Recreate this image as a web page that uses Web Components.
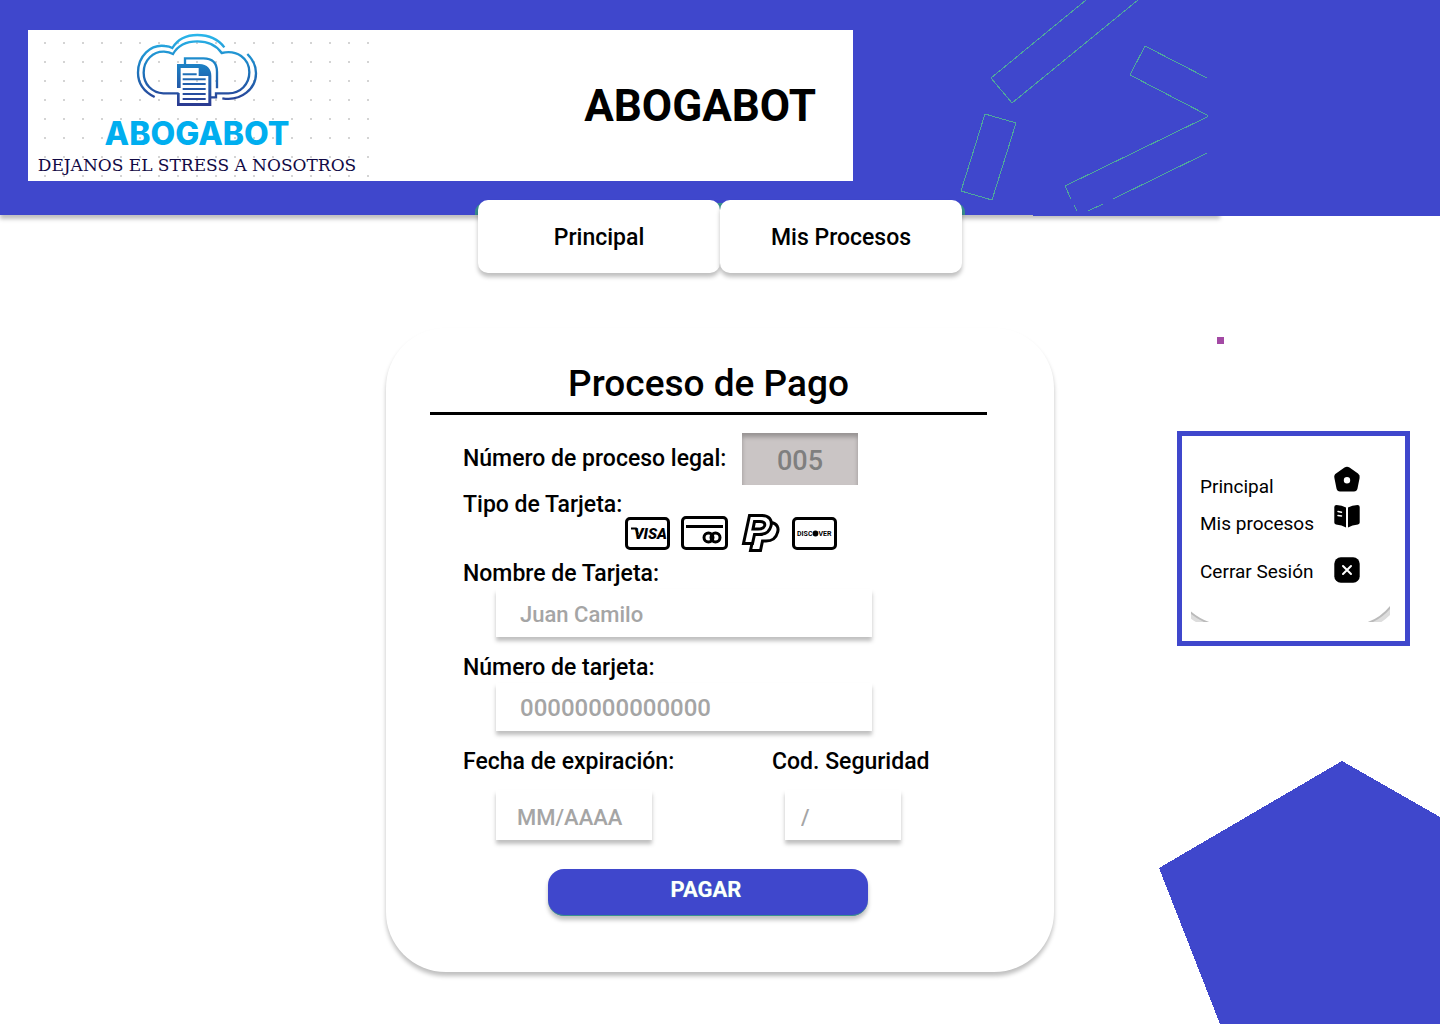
<!DOCTYPE html>
<html lang="es">
<head>
<meta charset="utf-8">
<title>Abogabot - Proceso de Pago</title>
<style>
  :root { --brand: #3f47cc; --teal: #39908f; --drop: 0 4px 4px rgba(0, 0, 0, .25); }
  body { margin: 0; background: #fff; color: #000; font-family: Roboto, "Noto Sans", sans-serif; }
</style>
</head>
<body>
<abogabot-app></abogabot-app>

<script>
const define = (name, html) => customElements.define(name, class extends HTMLElement {
  constructor() {
    super();
    const t = document.createElement('template');
    t.innerHTML = html;
    this.attachShadow({ mode: 'open' }).append(t.content.cloneNode(true));
  }
});

define('brand-logo', `
<style>
  :host { display: flex; flex-direction: column; align-items: center; box-sizing: border-box; width: 342px; padding: 2px 4px 0 0;
    background: radial-gradient(circle at 1px 1px, #d4d4d4 1px, transparent 1px) 16px 12px / 19px 19px; }
  svg { display: block; width: 126px; height: 76px; }
  .name { margin-top: 8px; font: 800 32px/36px Inter, sans-serif; color: #00aeef; }
  .motto { font: 17px/26px "DejaVu Serif", serif; color: #120a45; white-space: nowrap; }
</style>
<svg viewBox="342 36 378 228" fill="none" stroke="url(#g)" stroke-width="7" aria-hidden="true">
  <defs><linearGradient id="g" gradientUnits="userSpaceOnUse" x1="0" y1="44" x2="0" y2="258">
    <stop offset="0" stop-color="#29b6ea"/><stop offset=".45" stop-color="#1c7dc2"/><stop offset="1" stop-color="#2b3990"/></linearGradient></defs>
  <path d="M404 231C372 215 354 190 354 158C354 108 392 72 435 78Q448 79 457 84C474 56 500 45 532 45C566 45 595 58 613 82"/>
  <path d="M476 220H430C395 218 371 192 371 158C371 120 400 94 432 95Q448 96 459 102C473 77 500 64 532 64C565 64 590 77 605 99C650 88 688 115 688 157C688 192 662 220 625 220H588V232H570"/>
  <path d="M682 102C700 120 708 138 708 160C708 205 665 245 607 235"/>
  <path d="M495 132V115H550C580 115 591 130 591 155V205"/>
  <path fill="url(#g)" stroke="none" d="M471 132H538C562 132 574 148 574 168V258H471V219H479V249H565V168H536V144H482V204H471Z"/>
  <path stroke-width="6" d="M488 163H530M488 178H557M488 192H557M488 207H557M488 222H557M488 237H557"/>
</svg>
<span class="name">ABOGABOT</span>
<span class="motto">DEJANOS EL STRESS A NOSOTROS</span>`);

define('header-art', `
<style>
  :host { display: block; position: absolute; top: 0; right: 200px; width: 300px; height: 215px; pointer-events: none; }
  svg { display: block; }
</style>
<svg width="300" height="215" fill="none" stroke="#4fa89c" shape-rendering="crispEdges" aria-hidden="true">
  <path d="M146 0L51 78L72 103L198 0M267 78L205 46L190 75L267 115V117L125 186L131 199M134 205L137 211M148 211L163 204M173 199L267 153M45 114L76 123L52 200L21 191Z"/>
</svg>`);

define('site-header', `
<style>
  :host { display: block; position: relative; background: var(--brand); padding: 30px 28px 34px; }
  :host::before { content: ""; position: absolute; z-index: -1; inset: 0 220px 0 0; box-shadow: var(--drop); }
  :host::after { content: ""; position: absolute; top: 100%; right: 0; width: 407px; height: 1px; background: var(--brand); }
  header { display: flex; align-items: stretch; justify-content: space-between; box-sizing: border-box;
    max-width: 825px; height: 151px; padding-right: 37px; background: #fff; }
  h1 { margin: 0; align-self: center; font-size: 44px; line-height: 52px; font-weight: 700; }
</style>
<header><brand-logo></brand-logo><h1><slot></slot></h1></header>
<header-art></header-art>`);

define('main-tabs', `
<style>
  :host { display: block; position: relative; width: 484px; margin: -15px auto 0; }
  :host::before { content: ""; position: absolute; inset: 3px -3px auto; height: 12px; background: var(--teal); border-radius: 9px 9px 0 0; }
  nav { position: relative; display: flex; }
  ::slotted(a) { flex: 1; height: 73px; border-radius: 10px; background: #fff; box-shadow: var(--drop);
    font-size: 23px; line-height: 75px; font-weight: 500; text-align: center; color: #000; text-decoration: none; }
</style>
<nav aria-label="Principal"><slot></slot></nav>`);

class PayField extends HTMLElement {
  connectedCallback() {
    const root = this.attachShadow({ mode: 'open' });
    root.innerHTML = `
<style>
  :host { display: block; }
  label { display: block; font-size: 23px; line-height: 30px; font-weight: 500; white-space: nowrap; }
  input { display: block; box-sizing: border-box; width: 376px; max-width: 100%; height: 48px; margin: 0 0 0 33px; padding: 2px 24px 0;
    border: 0; border-radius: 0; outline: 0; background: #fff; box-shadow: var(--drop);
    font: 500 22px/28px Roboto, sans-serif; color: #a5a5a5; }
  input::placeholder { color: #a5a5a5; opacity: 1; }
  :host([kind="number"]) input { font-size: 24px; }
  :host([kind="date"]) input { width: 156px; height: 50px; margin-top: 13px; padding: 5px 21px 0; }
  :host([kind="code"]) input { width: 116px; height: 50px; margin: 13px 0 0 13px; padding: 5px 16px 0; }
  :host([kind="inline"]) .f { display: grid; grid-template-columns: 279px 116px; align-items: center; }
  :host([kind="inline"]) input { width: 116px; height: 52px; margin: 0; padding: 4px 0 0; text-align: center; font-size: 27px;
    background: #cac5c5; color: #7f7f7f; box-shadow: inset 0 4px 4px rgba(0, 0, 0, .25); }
</style>
<div class="f"><label for="c"><slot></slot></label><input id="c" type="text"></div>`;
    const input = root.querySelector('input');
    if (this.hasAttribute('value')) { input.value = this.getAttribute('value'); input.readOnly = true; }
    if (this.hasAttribute('placeholder')) input.placeholder = this.getAttribute('placeholder');
  }
}
customElements.define('pay-field', PayField);

define('card-types', `
<style>
  :host { display: grid; grid-template-columns: 162px auto; justify-content: start; }
  span { font-size: 23px; line-height: 32px; font-weight: 500; white-space: nowrap; }
  div { display: flex; align-items: center; gap: 11px; height: 40px; padding-top: 24px; }
  button { display: block; padding: 0; border: 0; background: none; color: #000; }
  svg { display: block; }
  text { font-family: Roboto, sans-serif; fill: currentColor; stroke: none; }
</style>
<span id="t"><slot></slot></span>
<div role="group" aria-labelledby="t">
  <button type="button" aria-label="Visa"><svg width="45" height="33" viewBox="0 0 45 33" fill="none" stroke="currentColor" stroke-width="3">
    <rect x="1.5" y="1.5" width="42" height="30" rx="3.5"/>
    <text x="9" y="22" font-size="15" font-weight="900" font-style="italic">VISA</text><path stroke-width="2" d="M6 11.500H11L13 17"/></svg></button>
  <button type="button" aria-label="Mastercard"><svg width="47" height="34" viewBox="0 0 47 34" fill="none" stroke="currentColor" stroke-width="3">
    <rect x="1.500" y="1.500" width="44" height="31" rx="3.500"/><path d="M5 10.500H42"/>
    <circle cx="27.500" cy="21.500" r="4.500"/><circle cx="34.500" cy="21.500" r="4.500"/></svg></button>
  <button type="button" aria-label="PayPal"><svg width="42" height="40" viewBox="0 0 42 40" fill="none" stroke="currentColor" stroke-width="3">
    <path d="M10.500 2.500H23C30 2.500 33.500 7 32 13C30.500 19 26 21.500 20 21.500H15.500L13.500 30.500H4.500Z"/>
    <path d="M15.500 8.500H21C24.500 8.500 26.500 10 25.500 13C24.500 15.500 22.500 16 19 16H14Z"/>
    <path d="M32 9.500C38.500 10.500 40 15 38.500 19.500C37 25.500 32 28 27 28H23.500L21.500 37.500H11.500L13 30.500"/></svg></button>
  <button type="button" aria-label="Discover"><svg width="45" height="33" viewBox="0 0 45 33" fill="none" stroke="currentColor" stroke-width="3">
    <rect x="1.500" y="1.500" width="42" height="30" rx="3.500"/>
    <text x="5" y="19" font-size="7" font-weight="700">DISC</text><circle cx="23.500" cy="16.500" r="2.900" fill="currentColor" stroke="none"/><text x="26.500" y="19" font-size="7" font-weight="700">VER</text></svg></button>
</div>`);

define('payment-card', `
<style>
  :host { display: block; box-sizing: border-box; padding: 31px 67px 56px 44px; border-radius: 60px; background: #fff; box-shadow: var(--drop); }
  h2 { margin: 0; padding-bottom: 4px; border-bottom: 3px solid #000; font-size: 37px; line-height: 49px; font-weight: 500; text-align: center; }
  form { display: flex; flex-direction: column; padding: 18px 0 0 33px; }
  card-types { margin-top: 4px; }
  .stack { display: grid; gap: 16px; margin-top: 6px; }
  .pair { display: grid; grid-template-columns: 309px 1fr; }
  button { width: 320px; height: 47px; margin: 29px 0 0 85px; padding: 0 4px 5px 0; border: 0; border-bottom: 1px solid var(--teal); border-radius: 16px;
    background: var(--brand); box-shadow: var(--drop); color: #fff; font: 700 22px/28px Roboto, sans-serif; text-shadow: 0 0 1px #4fc0a8; }
</style>
<h2>Proceso de Pago</h2>
<form>
  <pay-field kind="inline" value="005">Número de proceso legal:</pay-field>
  <card-types>Tipo de Tarjeta:</card-types>
  <div class="stack">
    <pay-field placeholder="Juan Camilo">Nombre de Tarjeta:</pay-field>
    <pay-field kind="number" placeholder="00000000000000">Número de tarjeta:</pay-field>
    <div class="pair">
      <pay-field kind="date" placeholder="MM/AAAA">Fecha de expiración:</pay-field>
      <pay-field kind="code" placeholder="/">Cod. Seguridad</pay-field>
    </div>
  </div>
  <button type="button">PAGAR</button>
</form>`);

define('side-menu', `
<style>
  :host { display: block; box-sizing: border-box; width: 233px; height: 215px; padding: 30px 9px 0; border: 5px solid var(--brand); background: #fff; }
  nav { display: grid; gap: 2px; padding: 0 35px 0 9px; }
  a { display: flex; justify-content: space-between; align-items: flex-start; color: #000; text-decoration: none; font-size: 19px; line-height: 28px; }
  span { padding-top: 7px; white-space: nowrap; }
  a:last-child { margin-top: 16px; }
  a:last-child span { padding-top: 2px; }
  svg { display: block; flex: none; }
  .curve { margin-top: 16px; }
</style>
<nav aria-label="Menú">
  <a href="#principal"><span>Principal</span><svg width="28" height="28" viewBox="0 0 28 28"><path fill-rule="evenodd" d="M11.500 1.500Q14 0 16.500 1.500L25 7.500Q27.300 9 26.600 12L24.500 22.500Q23.800 25.500 21 25.500H7Q4.200 25.500 3.500 22.500L1.400 12Q.7 9 3 7.500ZM14 11A3.200 3.200 0 1 0 14 17.400A3.200 3.200 0 1 0 14 11Z"/></svg></a>
  <a href="#procesos"><span>Mis procesos</span><svg width="28" height="28" viewBox="0 0 28 28"><path d="M3.500 2Q9 2 13 4.500V24.500Q9 22 3 21.500Q1.300 21.200 1.300 19.500V4Q1.300 2 3.500 2ZM24.500 2Q19 2 15 4.500V24.500Q19 22 25 21.500Q26.700 21.200 26.700 19.500V4Q26.700 2 24.500 2Z"/><path stroke="#fff" stroke-width="1.500" stroke-linecap="round" d="M5 8.500L8.500 9.200M5 12.500L8.500 13"/></svg></a>
  <a href="#salir"><span>Cerrar Sesión</span><svg width="28" height="28" viewBox="0 0 28 28"><rect x="1.300" y="1.300" width="25.400" height="25.400" rx="6.500"/><path stroke="#fff" stroke-width="2" stroke-linecap="round" d="M10 10L18 18M18 10L10 18"/></svg></a>
</nav>
<svg class="curve" width="199" height="20" viewBox="0 0 199 20" fill="none" aria-hidden="true">
  <path stroke="#ddd" stroke-width="5" d="M-3 11Q5 18 14 22M202 6Q192 18 181 22"/><path stroke="#bbb" stroke-width="2" d="M-2 9Q7 17 18 21M201 3Q191 16 177 21"/></svg>`);

define('abogabot-app', `
<style>
  :host { display: block; position: relative; z-index: 0; min-height: 100vh; overflow: hidden; }
  main { display: grid; grid-template-columns: 1fr 668px 1fr; align-items: start; margin-top: 55px; padding-bottom: 52px; }
  payment-card { grid-column: 2; }
  side-menu { justify-self: end; margin: 103px 30px 0 0; }
  .pentagon { position: absolute; z-index: -1; right: 0; bottom: 0; display: block; }
  .speck { position: absolute; top: 337px; right: 216px; width: 7px; height: 7px; background: #a349a4; }
</style>
<site-header>ABOGABOT</site-header>
<main-tabs><a href="#principal">Principal</a><a href="#procesos">Mis Procesos</a></main-tabs>
<main>
  <payment-card></payment-card>
  <side-menu></side-menu>
</main>
<svg class="pentagon" width="282" height="263" shape-rendering="crispEdges" aria-hidden="true"><path fill="#3f47cc" d="M184 0L282 56V263H62L1 107Z"/></svg>
<div class="speck"></div>`);
</script>
</body>
</html>
